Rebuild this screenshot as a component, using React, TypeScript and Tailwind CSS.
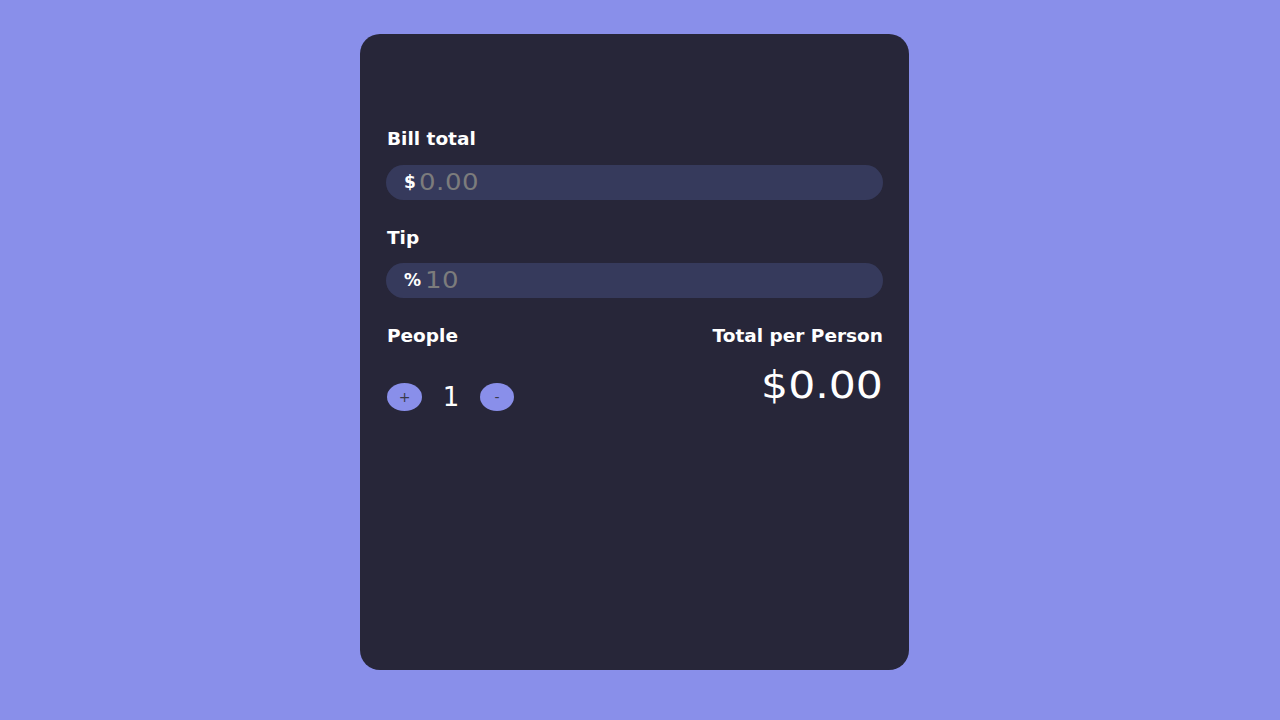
import React, { useState } from "react";

const App: React.FC = () => {
  const [people, setPeople] = useState(1);

  return (
    <div className="min-h-screen w-full bg-[#898fea] flex justify-center pt-[34px] pr-[11px] font-['DejaVu_Sans',sans-serif]">
      <div className="w-[549px] h-[636px] bg-[#272639] rounded-[20px] px-[26px] pt-[96px] text-white">
        {/* Bill */}
        <div className="text-[18.5px] font-bold leading-none mb-[16px] pl-[1px]">Bill total</div>
        <div className="h-[35px] rounded-full bg-[#363a5c] flex items-center pl-[18px] overflow-hidden">
          <span className="text-[17px] font-bold leading-none">$</span>
          <input
            className="ml-[3px] bg-transparent outline-none text-[23px] tracking-[0.5px] scale-x-[1.13] origin-left text-white placeholder:text-[#7c7c7c] w-[400px]"
            placeholder="0.00"
          />
        </div>

        {/* Tip */}
        <div className="text-[18.5px] font-bold leading-none mt-[29px] mb-[16px] pl-[1px]">Tip</div>
        <div className="h-[35px] rounded-full bg-[#363a5c] flex items-center pl-[18px] overflow-hidden">
          <span className="text-[17px] font-bold leading-none">%</span>
          <input
            className="ml-[4px] bg-transparent outline-none text-[23px] tracking-[0.5px] scale-x-[1.13] origin-left text-white placeholder:text-[#7c7c7c] w-[400px]"
            placeholder="10"
          />
        </div>

        {/* People / total */}
        <div className="flex justify-between mt-[29px] pl-[1px]">
          <div>
            <div className="text-[18.5px] font-bold leading-none">People</div>
            <div className="flex items-center mt-[37px]">
              <button
                onClick={() => setPeople(people + 1)}
                className="w-[35px] h-[28px] rounded-[50%] bg-[#898fea] text-[#3a3a4a] text-[14px] leading-none flex items-center justify-center"
              >
                +
              </button>
              <span className="text-[26px] w-[58px] text-center leading-none">{people}</span>
              <button
                onClick={() => setPeople(Math.max(1, people - 1))}
                className="w-[34px] h-[28px] rounded-[50%] bg-[#898fea] text-[#3a3a4a] text-[14px] leading-none flex items-center justify-center"
              >
                -
              </button>
            </div>
          </div>
          <div className="text-right">
            <div className="text-[18.5px] font-bold leading-none">Total per Person</div>
            <div className="mt-[21px] leading-none">
              <span className="inline-block text-[37px] leading-none scale-x-[1.15] origin-right">$0.00</span>
            </div>
          </div>
        </div>
      </div>
    </div>
  );
};

export default App;
